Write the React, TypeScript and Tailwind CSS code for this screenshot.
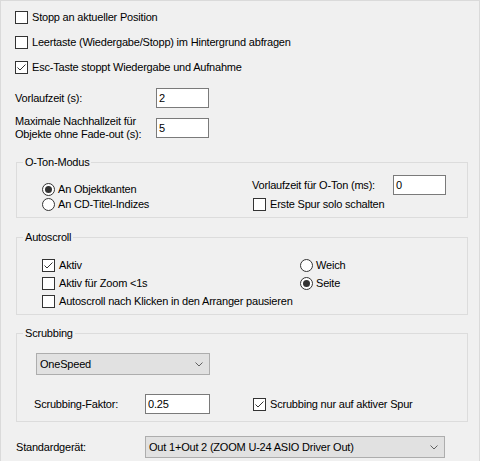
import React from "react"

const ink = "text-black"

function Check({ checked = false }: { checked?: boolean }) {
  return (
    <span className="flex-none w-[13px] h-[13px] border border-[#333333] bg-white flex items-center justify-center">
      {checked && (
        <svg width="11" height="11" viewBox="0 0 11 11">
          <polyline points="1.5,5.5 4,8 9.5,2.5" fill="none" stroke="#333333" strokeWidth="1" />
        </svg>
      )}
    </span>
  )
}

function Radio({ checked = false }: { checked?: boolean }) {
  return (
    <span className="flex-none w-[13px] h-[13px] rounded-full border border-[#333333] bg-white flex items-center justify-center">
      {checked && <span className="w-[7px] h-[7px] rounded-full bg-[#333333]" />}
    </span>
  )
}

function CheckRow({ label, checked, className = "" }: { label: string; checked?: boolean; className?: string }) {
  return (
    <div className={`h-[13px] flex items-center gap-[4px] ${className}`}>
      <Check checked={checked} />
      <span className="whitespace-nowrap">{label}</span>
    </div>
  )
}

function RadioRow({ label, checked, className = "" }: { label: string; checked?: boolean; className?: string }) {
  return (
    <div className={`flex items-center gap-[3px] ${className}`}>
      <Radio checked={checked} />
      <span className="whitespace-nowrap">{label}</span>
    </div>
  )
}

function Field({ value, width }: { value: string; width: string }) {
  return (
    <div className={`flex-none h-[20px] ${width} border border-[#7a7a7a] bg-white pl-[2px] flex items-center`}>
      {value}
    </div>
  )
}

function Combo({ value, width }: { value: string; width: string }) {
  return (
    <div className={`flex-none h-[22px] ${width} border border-[#adadad] bg-[#e1e1e1] pl-[3px] pr-[6px] flex items-center justify-between`}>
      <span className="whitespace-nowrap">{value}</span>
      <svg width="8" height="5" viewBox="0 0 8 5">
        <polyline points="0.5,0.5 4,4 7.5,0.5" fill="none" stroke="#606060" strokeWidth="1" />
      </svg>
    </div>
  )
}

function Group({ title, className = "", children }: { title: string; className?: string; children: React.ReactNode }) {
  return (
    <fieldset className={`ml-[1px] w-[452px] border border-[#dcdcdc] ${className}`}>
      <legend className="ml-[6px] px-[2px] leading-[15px]">{title}</legend>
      {children}
    </fieldset>
  )
}

export default function App() {
  return (
    <div
      className={`w-[480px] h-[461px] overflow-hidden bg-[#f0f0f0] border-x border-t border-[#dadada] font-['Liberation_Sans',Arial,sans-serif] text-[11px] tracking-[-0.2px] ${ink}`}
    >
      <div className="pt-[10px] pl-[14px]">
        <CheckRow label="Stopp an aktueller Position" />
        <CheckRow label="Leertaste (Wiedergabe/Stopp) im Hintergrund abfragen" className="mt-[12px]" />
        <CheckRow label="Esc-Taste stoppt Wiedergabe und Aufnahme" checked className="mt-[12px]" />

        <div className="mt-[14px] h-[20px] flex items-center">
          <span className="w-[141px] flex-none">Vorlaufzeit (s):</span>
          <Field value="2" width="w-[53px]" />
        </div>
        <div className="mt-[10px] h-[20px] flex items-center">
          <span className="w-[141px] flex-none leading-[13px]">
            Maximale Nachhallzeit für
            <br />
            Objekte ohne Fade-out (s):
          </span>
          <Field value="5" width="w-[53px]" />
        </div>

        {/* O-Ton */}
        <Group title="O-Ton-Modus" className="mt-[17px]">
          <div className="h-[47px] flex">
            <div className="pl-[25px] w-[235px] pt-[12px] flex flex-col">
              <RadioRow label="An Objektkanten" checked className="h-[15px]" />
              <RadioRow label="An CD-Titel-Indizes" className="h-[15px]" />
            </div>
            <div className="pt-[5px] flex flex-col">
              <div className="h-[20px] flex items-center">
                <span className="w-[141px] flex-none">Vorlaufzeit für O-Ton (ms):</span>
                <Field value="0" width="w-[53px]" />
              </div>
              <CheckRow label="Erste Spur solo schalten" className="mt-[3px] ml-[1px]" />
            </div>
          </div>
        </Group>

        {/* Autoscroll */}
        <Group title="Autoscroll" className="mt-[12px]">
          <div className="h-[69px] flex">
            <div className="pl-[25px] w-[283px] pt-[14px] flex flex-col gap-[5px]">
              <CheckRow label="Aktiv" checked />
              <CheckRow label="Aktiv für Zoom <1s" />
              <CheckRow label="Autoscroll nach Klicken in den Arranger pausieren" />
            </div>
            <div className="pt-[14px] flex flex-col gap-[5px]">
              <RadioRow label="Weich" className="h-[13px]" />
              <RadioRow label="Seite" checked className="h-[13px]" />
            </div>
          </div>
        </Group>

        {/* Scrubbing */}
        <Group title="Scrubbing" className="mt-[11px]">
          <div className="h-[80px] flex flex-col">
            <div className="pl-[19px] pt-[12px]">
              <Combo value="OneSpeed" width="w-[174px]" />
            </div>
            <div className="mt-[19px] h-[20px] pl-[17px] flex items-center">
              <span className="w-[111px] flex-none">Scrubbing-Faktor:</span>
              <Field value="0.25" width="w-[65px]" />
              <CheckRow label="Scrubbing nur auf aktiver Spur" checked className="ml-[43px]" />
            </div>
          </div>
        </Group>

        <div className="mt-[14px] ml-[1px] flex items-center">
          <span className="w-[129px] flex-none">Standardgerät:</span>
          <Combo value="Out 1+Out 2 (ZOOM U-24 ASIO Driver Out)" width="w-[300px]" />
        </div>
      </div>
    </div>
  )
}
